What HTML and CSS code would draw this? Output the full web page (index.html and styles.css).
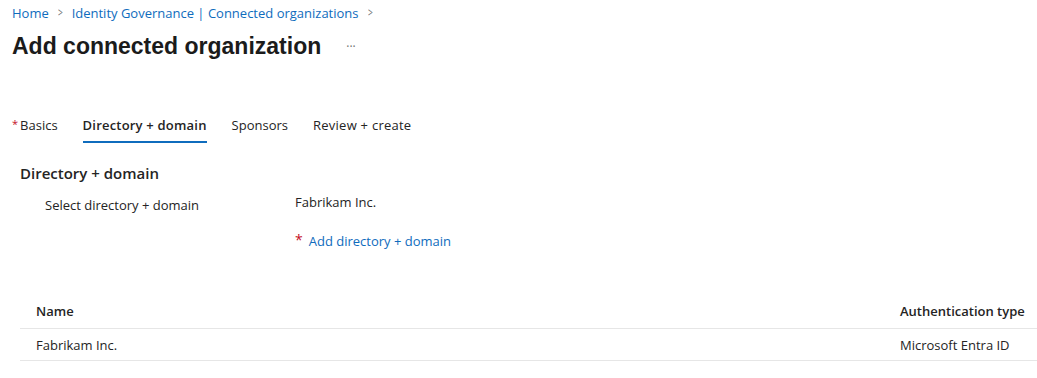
FILE: index.html
```html
<!DOCTYPE html>
<html lang="en">
<head>
<meta charset="utf-8">
<title>Add connected organization</title>
<link rel="stylesheet" href="styles.css">
</head>
<body>
<div class="page">
  <nav class="crumbs">
    <a class="crumb" href="#">Home</a>
    <span class="sep">&gt;</span>
    <a class="crumb" href="#">Identity Governance | Connected organizations</a>
    <span class="sep">&gt;</span>
  </nav>
  <div class="title-row">
    <h1 class="title">Add connected organization</h1>
    <span class="more">&middot;&middot;&middot;</span>
  </div>
  <div class="tabs">
    <div class="tab"><span class="req">*</span>Basics</div>
    <div class="tab active">Directory + domain</div>
    <div class="tab">Sponsors</div>
    <div class="tab">Review + create</div>
  </div>
  <section class="section">
    <h2 class="section-title">Directory + domain</h2>
    <div class="field">
      <div class="field-label">Select directory + domain</div>
      <div class="field-value">
        <div class="value-text">Fabrikam Inc.</div>
        <div class="add-row"><span class="req big">*</span><a class="add-link" href="#">Add directory + domain</a></div>
      </div>
    </div>
  </section>
  <div class="table">
    <div class="row head">
      <div class="cell name">Name</div>
      <div class="cell auth">Authentication type</div>
    </div>
    <div class="row">
      <div class="cell name">Fabrikam Inc.</div>
      <div class="cell auth">Microsoft Entra ID</div>
    </div>
  </div>
</div>
</body>
</html>
```
FILE: styles.css
```css
* { box-sizing: border-box; }
html, body { margin: 0; padding: 0; background: #fff; }
body {
  font-family: "Open Sans", "Noto Sans", sans-serif;
  font-size: 13px;
  color: #242424;
}
.page { padding: 0 0 0 12px; }
.crumbs {
  display: flex;
  align-items: center;
  gap: 8px;
  height: 24px;
  padding-top: 1px;
}
.crumb { color: #0f6cbd; text-decoration: none; }
.sep { color: #707070; font-size: 12px; transform: scaleX(0.7); }
.title-row {
  display: flex;
  align-items: center;
  height: 44px;
}
.title {
  margin: 0;
  font-family: "Liberation Sans", Arial, sans-serif;
  font-weight: 700;
  font-size: 23px;
  color: #1b1b1b;
}
.more {
  margin-left: 25px;
  color: #707070;
  font-size: 12px;
}
.tabs {
  display: flex;
  margin-top: 42px;
  height: 36px;
}
.tab {
  padding: 6px 0 0;
  margin-right: 25px;
  color: #242424;
  height: 33px;
}
.tab.active {
  font-weight: 600;
  border-bottom: 2px solid #0f6cbd;
  letter-spacing: 0.2px;
}
.tab:last-child { letter-spacing: 0.25px; }
.req { color: #c50f1f; font-size: 11px; vertical-align: top; margin-right: 2px; }
.req.big { font-size: 14px; margin-right: 6px; }
.section { padding-left: 8px; margin-top: 13px; }
.section-title {
  margin: 0;
  padding-top: 4px;
  font-size: 15px;
  font-weight: 600;
  color: #242424;
  height: 24px;
}
.field { display: flex; margin-top: 10px; }
.field-label { width: 275px; padding-left: 25px; padding-top: 3px; }
.field-value { display: flex; flex-direction: column; }
.value-text { height: 20px; }
.add-row { margin-top: 17px; display: flex; align-items: flex-start; }
.add-link { color: #0f6cbd; text-decoration: none; padding-top: 2px; }
.table { margin-top: 41px; margin-left: 8px; }
.row {
  display: flex;
  height: 32px;
  align-items: center;
  border-bottom: 1px solid #e6e6e6;
  padding: 0 0 0 16px;
}
.row.head { font-weight: 600; height: 38px; padding-top: 2px; }
.cell.name { flex: 1; }
.cell.auth { width: 137px; }
```
